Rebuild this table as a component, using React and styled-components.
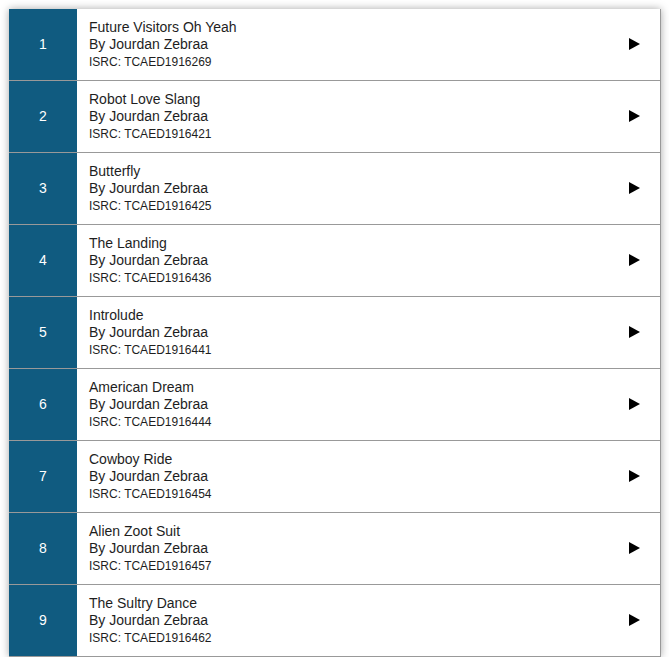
import React from "react";
import styled, { createGlobalStyle } from "styled-components";

const Global = createGlobalStyle`
  body {
    margin: 0;
    background: #fff;
    font-family: Arial, "Liberation Sans", sans-serif;
  }
`;

const List = styled.div`
  margin: 9px 0 0 9px;
  width: 651px;
  border-right: 1px solid #999;
  box-shadow: 0 0 8px rgba(0, 0, 0, 0.35);
  background: #fff;
`;

const Row = styled.div`
  display: flex;
  height: 71px;
  border-bottom: 1px solid #999;
`;

const Num = styled.div`
  width: 68px;
  flex: none;
  background: #105b80;
  color: #fff;
  font-size: 14px;
  display: flex;
  align-items: center;
  justify-content: center;
  padding-bottom: 1px;
`;

const Info = styled.div`
  flex: 1;
  display: flex;
  flex-direction: column;
  justify-content: center;
  padding-left: 12px;
  padding-top: 2px;
  color: #1e1e1e;
`;

const Line = styled.div`
  font-size: ${(p) => (p.small ? "12px" : "14px")};
  line-height: ${(p) => (p.small ? "19px" : "17px")};
`;

const Play = styled.div`
  width: 20px;
  flex: none;
  margin-right: 20px;
  display: flex;
  align-items: center;
  justify-content: flex-end;
  padding-bottom: 1px;
`;

const tracks = [
  ["Future Visitors Oh Yeah", "TCAED1916269"],
  ["Robot Love Slang", "TCAED1916421"],
  ["Butterfly", "TCAED1916425"],
  ["The Landing", "TCAED1916436"],
  ["Introlude", "TCAED1916441"],
  ["American Dream", "TCAED1916444"],
  ["Cowboy Ride", "TCAED1916454"],
  ["Alien Zoot Suit", "TCAED1916457"],
  ["The Sultry Dance", "TCAED1916462"],
];

export default function App() {
  return (
    <>
      <Global />
      <List>
        {tracks.map(([title, isrc], i) => (
          <Row key={isrc}>
            <Num>{i + 1}</Num>
            <Info>
              <Line>{title}</Line>
              <Line>By Jourdan Zebraa</Line>
              <Line small>ISRC: {isrc}</Line>
            </Info>
            <Play>
              <svg width="11" height="12" viewBox="0 0 11 12">
                <polygon points="0,0 11,6 0,12" fill="#000" />
              </svg>
            </Play>
          </Row>
        ))}
      </List>
    </>
  );
}
